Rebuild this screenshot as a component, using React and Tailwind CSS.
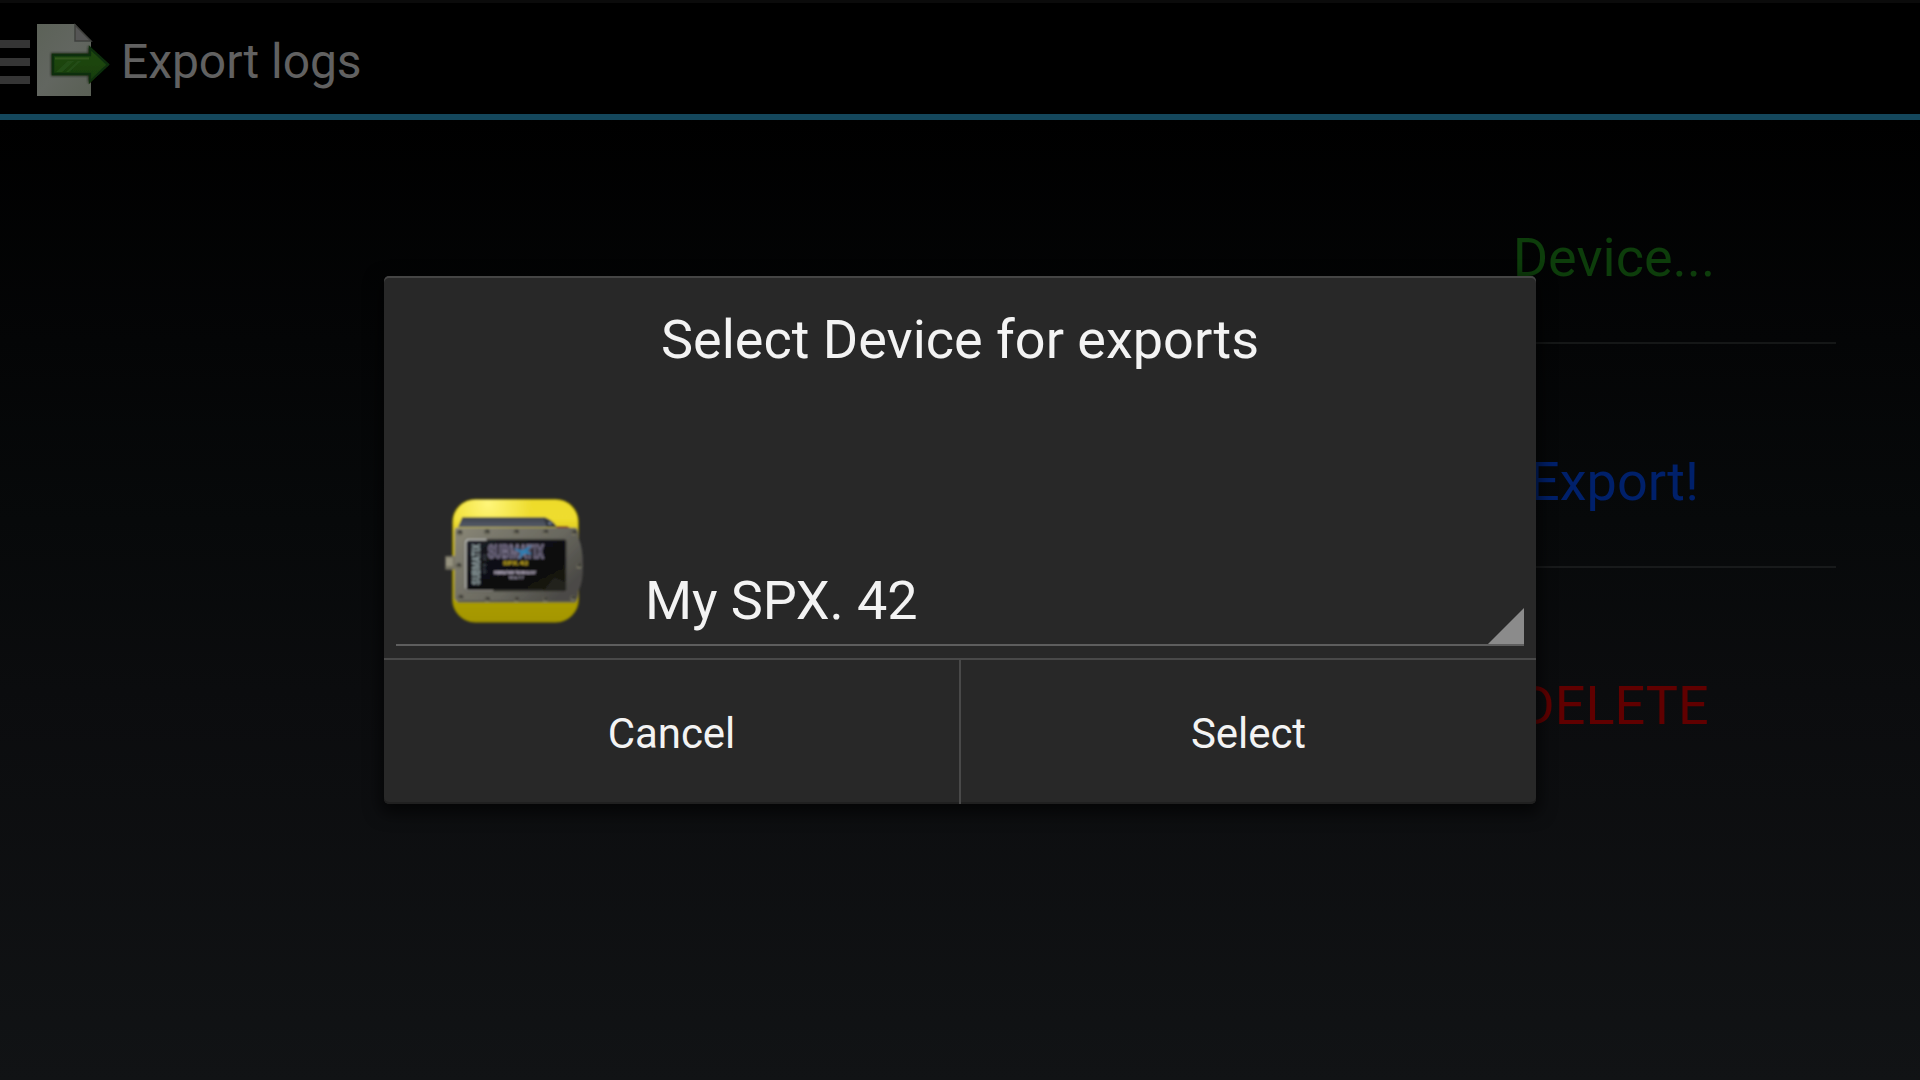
function ExportIcon() {
  return (
    <svg className="h-[78px] w-[78px] shrink-0" viewBox="33 21 78 78">
      <defs>
        <linearGradient id="sheet" x1="0" y1="0" x2="1" y2="1">
          <stop offset="0" stopColor="#5c6258" />
          <stop offset="0.5" stopColor="#626660" />
          <stop offset="1" stopColor="#5a6055" />
        </linearGradient>
        <linearGradient id="arrow" x1="0" y1="0" x2="0" y2="1">
          <stop offset="0" stopColor="#1e4712" />
          <stop offset="0.5" stopColor="#1b440f" />
          <stop offset="1" stopColor="#173c0a" />
        </linearGradient>
        <filter id="soft" x="-20%" y="-20%" width="140%" height="140%">
          <feGaussianBlur stdDeviation="1.2" />
        </filter>
        <filter id="softEdge" x="-10%" y="-10%" width="120%" height="120%">
          <feGaussianBlur stdDeviation="0.7" />
        </filter>
      </defs>
      <path d="M37 24H75L91 41V96H37Z" fill="url(#sheet)" />
      <g filter="url(#softEdge)">
        <path d="M75 25V41H91Z" fill="#555554" stroke="#3f403e" strokeWidth="1.5" />
        <path d="M51 53H88V46L109 64.500L88 83V76H51Z" fill="#1d2919" filter="url(#soft)" />
        <path d="M53 55H90V48L108 64.500L90 81.500V74H53Z" fill="url(#arrow)" stroke="#0f2e08" strokeWidth="2.4" />
        <path d="M55 58.500H89" stroke="#30571f" strokeWidth="1.800" />
        <path d="M56 72L68 61H74L62 72ZM66 72L78 61H81L69 72Z" fill="#2c551d" opacity="0.600" />
      </g>
    </svg>
  );
}

const screws = [
  [89, 158], [171, 156], [259, 156], [347, 156], [432, 158],
  [86, 257], [447, 257],
  [92, 352], [172, 358], [259, 358], [346, 358], [429, 354],
];

function DeviceIcon() {
  return (
    <svg className="h-[160px] w-[170px] shrink-0" viewBox="0 0 510 480">
      <defs>
        <linearGradient id="yellow" x1="0" y1="0" x2="0" y2="1">
          <stop offset="0" stopColor="#eddb2b" />
          <stop offset="0.15" stopColor="#efdd2e" />
          <stop offset="0.3" stopColor="#d9c51a" />
          <stop offset="0.85" stopColor="#a99b00" />
          <stop offset="1" stopColor="#a49600" />
        </linearGradient>
        <radialGradient id="glow" cx="0.28" cy="0.03" r="0.35">
          <stop offset="0" stopColor="#fff67a" />
          <stop offset="1" stopColor="#fff67a" stopOpacity="0" />
        </radialGradient>
        <linearGradient id="metal" x1="0" y1="0" x2="1" y2="0.6">
          <stop offset="0" stopColor="#8b8877" />
          <stop offset="0.25" stopColor="#7b796d" />
          <stop offset="0.65" stopColor="#69685f" />
          <stop offset="1" stopColor="#4b4a46" />
        </linearGradient>
        <linearGradient id="lid" x1="0" y1="0" x2="0" y2="1">
          <stop offset="0" stopColor="#3e434d" />
          <stop offset="1" stopColor="#565b68" />
        </linearGradient>
        <linearGradient id="screen" x1="0" y1="0" x2="1" y2="1">
          <stop offset="0" stopColor="#20222a" />
          <stop offset="0.4" stopColor="#0e0e12" />
          <stop offset="1" stopColor="#141410" />
        </linearGradient>
        <filter id="blur2" x="-10%" y="-10%" width="120%" height="120%">
          <feGaussianBlur stdDeviation="2.4" />
        </filter>
      </defs>
      <g filter="url(#blur2)">
        <rect x="68" y="58" width="377" height="368" rx="68" fill="url(#yellow)" stroke="#8d8208" strokeWidth="4" />
        <rect x="70" y="60" width="373" height="364" rx="66" fill="url(#glow)" />
        <path d="M84 142L97 112H345Q368 120 381 142Z" fill="url(#lid)" />
        <path d="M340 114Q366 120 381 141H350Z" fill="#30353e" />
        <circle cx="360" cy="130" r="5" fill="#69758c" />
        <path d="M380 138H412L420 144H380Z" fill="#8e3b12" />
        <rect x="46" y="228" width="32" height="41" fill="#777463" />
        <rect x="48" y="234" width="20" height="24" fill="#969380" />
        <path d="M76 143H438Q446 150 446 175Q459 205 459 257Q459 310 446 330Q445 356 436 367H84L74 356V152Z" fill="url(#metal)" />
        <path d="M84 364H436" stroke="#55544c" strokeWidth="5" />
        {screws.map(([x, y]) => (
          <g key={`${x}-${y}`}>
            <circle cx={x} cy={y} r="9" fill="#5c5a50" />
            <circle cx={x + 2} cy={y - 2} r="5" fill="#3d3c37" />
            <path d={`M${x - 7} ${y + 6}H${x + 6}`} stroke="#85826f" strokeWidth="3" />
          </g>
        ))}
        <rect x="106" y="178" width="303" height="155" rx="8" fill="url(#screen)" stroke="#45443f" strokeWidth="4" />
        <path d="M107 326V188Q107 179 116 179H170" fill="none" stroke="#b9b9b4" strokeWidth="5" />
        <path d="M107 326Q108 332 116 332H190" fill="none" stroke="#8b8a83" strokeWidth="4" />
        <path d="M340 332L372 292L407 305V332Z" fill="#20201a" />
        <g fontFamily="Roboto, sans-serif" fontWeight="700">
          <text transform="translate(150 314) rotate(-90)" fontSize="32" textLength="122" lengthAdjust="spacingAndGlyphs" fill="#8c9b9d" stroke="#8c9b9d" strokeWidth="1.2">SUBMATIX</text>
          <text transform="translate(167 280) rotate(-90)" fontSize="11" textLength="56" fill="#56616a">SPX 42</text>
          <text x="173" y="233" fontSize="53" textLength="168" lengthAdjust="spacingAndGlyphs" fill="#292638" stroke="#7f7890" strokeWidth="4">SUBMATIX</text>
          <path d="M248 205L278 211L305 195L292 213L307 223L283 221L266 238L272 219Z" fill="#2d7db0" />
          <text x="219" y="255" fontSize="18" textLength="76" lengthAdjust="spacingAndGlyphs" fill="#b29a16" stroke="#b29a16" strokeWidth="1">SPX.42</text>
          <text x="193" y="281" fontSize="12" textLength="124" lengthAdjust="spacingAndGlyphs" fill="#b9b0c4" stroke="#aaa1b5" strokeWidth="0.8">REBREATHER TECHNOLOGY</text>
          <text x="237" y="297" fontSize="11" textLength="44" lengthAdjust="spacingAndGlyphs" fill="#a8a2b6" stroke="#9690a4" strokeWidth="0.6">V2.6.7.7</text>
        </g>
      </g>
    </svg>
  );
}

function Header() {
  return (
    <header className="flex h-[120px] items-center border-t-[3px] border-b-[6px] border-t-[#0b0b0b] border-b-[#14475c] bg-black">
      <div className="flex w-[30px] flex-col gap-[10.500px] pt-[7px]">
        <div className="h-[7.500px] bg-[#353535]" />
        <div className="h-[7.500px] bg-[#353535]" />
        <div className="h-[7.500px] bg-[#353535]" />
      </div>
      <div className="ml-[3px] pt-[3px]"><ExportIcon /></div>
      <h1 className="ml-[10px] pt-[6px] text-5xl leading-none tracking-[-0.06px] text-[#616161]">Export logs</h1>
    </header>
  );
}

function Actions() {
  return (
    <nav className="ml-auto mr-[84px] flex w-[444px] flex-col text-center text-[54px] leading-[54px]">
      <div className="h-[224px] border-b-2 border-[#151717] pt-[111px] text-[#0d3d0b]">Device...</div>
      <div className="h-[224px] border-b-2 border-[#181a1b] pt-[111px] text-[#00206a]">Export!</div>
      <div className="h-[224px] pt-[111px] text-[#600000]">DELETE</div>
    </nav>
  );
}

function DeviceDialog() {
  return (
    <section className="flex h-[528px] w-[1152px] flex-col overflow-hidden rounded-[5px] bg-[#282828] text-[#f3f3f3] shadow-[0_6px_16px_4px_rgba(0,0,0,0.6),inset_0_2px_0_#454545,inset_0_-2px_0_#202020]">
      <h2 className="pt-[37px] text-center text-[54px] leading-[54px]">Select Device for exports</h2>
      <div className="mx-[12px] mt-auto flex h-[166px] items-end border-b-2 border-[#5e5e5e]">
        <div className="ml-[34px] mb-[4px]"><DeviceIcon /></div>
        <span className="ml-[45px] mb-[16px] text-[54px] leading-[54px] tracking-[-0.12px]">My SPX. 42</span>
        <svg className="ml-auto h-[36px] w-[36px]" viewBox="0 0 36 36">
          <path d="M36 0V36H0Z" fill="#8b8b8b" />
        </svg>
      </div>
      <div className="mt-[12px] flex h-[146px] shrink-0 border-t-2 border-[#494949] text-[42px] leading-[42px]">
        <button className="w-[575px] pt-1 tracking-[-0.06px]">Cancel</button>
        <div className="w-[2px] bg-[#494949]" />
        <button className="flex-1 pt-1 tracking-[-0.06px]">Select</button>
      </div>
    </section>
  );
}

export default function App() {
  return (
    <div className="relative h-[1080px] w-[1920px] overflow-hidden bg-[linear-gradient(to_bottom,#000000_120px,#040506_340px,#07090a_520px,#0b0c0e_690px,#111315_1080px)] font-[Roboto,sans-serif]">
      <Header />
      <Actions />
      <div className="absolute inset-0 flex items-start justify-center pt-[276px]">
        <DeviceDialog />
      </div>
    </div>
  );
}
